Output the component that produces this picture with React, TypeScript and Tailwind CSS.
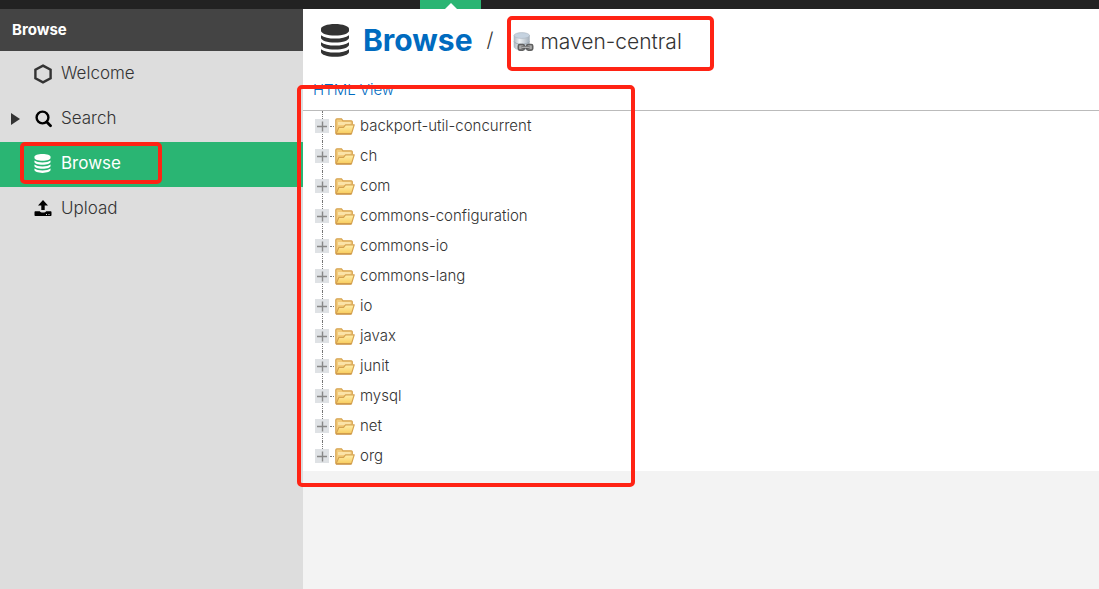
import { useState } from 'react'
import clsx from 'clsx'

const navItems = ['Welcome', 'Search', 'Browse', 'Upload'] as const
type NavItem = (typeof navItems)[number]

const folders = [
  'backport-util-concurrent',
  'ch',
  'com',
  'commons-configuration',
  'commons-io',
  'commons-lang',
  'io',
  'javax',
  'junit',
  'mysql',
  'net',
  'org',
]

function DatabaseIcon({ className }: { className?: string }) {
  return (
    <svg viewBox="0 0 28 33" className={className} fill="currentColor" aria-hidden="true">
      <path d="M14 0c8 0 14 2.200 14 4.800v2c0 2.600-6 4.800-14 4.800S0 9.400 0 6.800v-2C0 2.200 6 0 14 0z" />
      <path d="M0 11.200c3 2.300 8 3.400 14 3.400s11-1.100 14-3.400v2.600c0 2.600-6 4.800-14 4.800S0 16.400 0 13.800z" />
      <path d="M0 18.200c3 2.300 8 3.400 14 3.400s11-1.100 14-3.400v2.600c0 2.600-6 4.800-14 4.800S0 23.400 0 20.800z" />
      <path d="M0 25.200c3 2.300 8 3.400 14 3.400s11-1.100 14-3.400v2.800c0 2.600-6 4.800-14 4.800S0 30.600 0 28z" />
    </svg>
  )
}

function NavIcon({ name }: { name: NavItem }) {
  if (name === 'Welcome') {
    return (
      <svg viewBox="0 0 18 20" className="h-5 w-[18px]" fill="none" stroke="#333" strokeWidth="2.4" aria-hidden="true">
        <path d="M9 1.600 16.600 5.800v8.400L9 18.400 1.400 14.200V5.800z" />
      </svg>
    )
  }
  if (name === 'Search') {
    return (
      <svg viewBox="0 0 18 18" className="size-[18px]" fill="none" stroke="#000" aria-hidden="true">
        <circle cx="8.500" cy="7.500" r="5.900" strokeWidth="2.400" />
        <path d="m12.800 12 3.700 3.700" strokeWidth="2.800" strokeLinecap="round" />
      </svg>
    )
  }
  if (name === 'Browse') {
    return <DatabaseIcon className="h-[19px] w-[17px]" />
  }
  return (
    <svg viewBox="0 0 18 17" className="h-[17px] w-[18px]" fill="#000" aria-hidden="true">
      <path d="M9 0l5 5.500h-3.300V10H7.300V5.500H4z" />
      <path fillRule="evenodd" d="M1.500 11.200h4.300c.3.900 1.600 1.400 3.200 1.400s2.900-.5 3.200-1.400h4.300c.6 0 1 .4 1 1V15c0 .6-.4 1-1 1h-15c-.6 0-1-.4-1-1v-2.800c0-.6.4-1 1-1zM12 14v1h1v-1zm2.500 0v1h1v-1z" />
    </svg>
  )
}

function ProxyIcon() {
  return (
    <svg viewBox="0 0 21 20" className="h-5 w-[21px]" aria-hidden="true">
      <defs>
        <linearGradient id="drum">
          <stop offset="0" stopColor="#aeb8c2" />
          <stop offset=".35" stopColor="#eef2f5" />
          <stop offset="1" stopColor="#a5b0bb" />
        </linearGradient>
      </defs>
      <path d="M1 3.500v11c0 2 3.200 3.300 7.500 3.300s8-1.300 8-3.300v-11z" fill="url(#drum)" stroke="#b3bcc5" strokeWidth=".6" />
      <path d="M1 9.500c1 1.900 4 2.700 7.500 2.700s7-.8 8-2.700" fill="none" stroke="#98a4af" strokeWidth=".8" />
      <ellipse cx="8.750" cy="3.500" rx="7.750" ry="2.900" fill="#c6d3e0" stroke="#a9b4bf" strokeWidth=".6" />
      <g fill="#aaa" stroke="#606060" strokeWidth="1.600">
        <rect x="5.300" y="12.500" width="6" height="5.600" rx="1.500" />
        <rect x="13.700" y="12.500" width="6" height="5.600" rx="1.500" />
      </g>
      <path d="M8.500 15.300h8" stroke="#555" strokeWidth="2.800" />
      <path d="M8.500 15.200h8" stroke="#d5d5d5" strokeWidth="1" />
    </svg>
  )
}

function FolderIcon() {
  return (
    <svg viewBox="0 0 20 17" className="h-[17px] w-5 shrink-0" aria-hidden="true">
      <defs>
        <linearGradient id="flap" x2="0" y2="1">
          <stop offset="0" stopColor="#fff0b0" />
          <stop offset="1" stopColor="#f8cc5c" />
        </linearGradient>
      </defs>
      <path d="M.800 15.500V2c0-.7.400-1.200 1.200-1.200h4.500L8 2.800h8.300c.6 0 1 .4 1 1v3" fill="#f3cc7c" stroke="#d6a350" strokeWidth="1.200" />
      <path d="M3 4h12.500v3H3z" fill="#fbe3a8" />
      <path d="M1 15.700 4 9.300h4.500l2-2.500h8.700l-2.700 8.900z" fill="url(#flap)" stroke="#d6a350" strokeWidth="1.200" strokeLinejoin="round" />
      <path d="M1 16.200h15.500" stroke="#c98f40" strokeWidth="1" />
    </svg>
  )
}

function Marker({ className }: { className: string }) {
  return <span className={clsx('pointer-events-none absolute z-10 rounded-[5px] border-4 border-[#ff2314]', className)} />
}

function Sidebar({ active, onSelect }: { active: NavItem; onSelect: (item: NavItem) => void }) {
  return (
    <aside className="w-[303px] shrink-0 bg-[#ddd]">
      <h2 className="flex h-[42px] items-center bg-[#444] px-3 text-[15px] font-bold text-white">Browse</h2>
      <nav className="mt-px">
        {navItems.map((item) => (
          <div key={item} className="relative">
            <button
              type="button"
              onClick={() => onSelect(item)}
              className={clsx(
                'flex h-[45px] w-full items-center pb-0.5 text-left text-[17px]',
                item === active ? 'bg-[#2ab573] text-white' : 'font-light text-[#333]',
              )}
            >
              <span className="w-[34px] pl-[11px]">
                {item === 'Search' && (
                  <svg viewBox="0 0 9 12" className="h-3 w-[9px]" fill="#333" aria-hidden="true">
                    <path d="M0 0l9 6-9 6z" />
                  </svg>
                )}
              </span>
              <span className="w-[27px]">
                <NavIcon name={item} />
              </span>
              {item}
            </button>
            {item === 'Browse' && <Marker className="top-0 left-5 h-[42px] w-[142px]" />}
          </div>
        ))}
      </nav>
    </aside>
  )
}

function TreeRow({ name, last }: { name: string; last: boolean }) {
  return (
    <li className="relative flex h-[30px] items-center pl-3">
      <span className={clsx('absolute top-0 left-[19px] border-l border-dotted border-[#777]', last ? 'h-4' : 'h-full')} />
      <button type="button" aria-label={`Expand ${name}`} className="relative mr-px size-3.5 bg-[#dfe2e5]">
        <svg viewBox="0 0 14 14" className="size-3.5" stroke="#888" strokeWidth="1.400" aria-hidden="true">
          <path d="M2 7.500h10M7.500 2.500v10" />
        </svg>
      </button>
      <span className="mr-px w-1 border-t border-dotted border-[#777]" />
      <FolderIcon />
      <span className="pl-[5px]">{name}</span>
    </li>
  )
}

export default function App() {
  const [active, setActive] = useState<NavItem>('Browse')

  return (
    <div className="flex min-h-screen flex-col bg-[#f3f3f3] font-['Inter',sans-serif] text-[#333]">
      <div className="flex h-[9px] bg-[#222]">
        <div className="ml-[420px] flex w-[61px] items-end justify-center bg-[#2ab573]">
          <svg viewBox="0 0 12 6" className="h-1.5 w-3" fill="#fff" aria-hidden="true">
            <path d="M0 6l6-6 6 6z" />
          </svg>
        </div>
      </div>
      <div className="flex flex-1">
        <Sidebar active={active} onSelect={setActive} />
        <main className="min-w-0 flex-1">
          <div className="bg-white">
            <header className="flex items-start pt-[7px] pl-[18px]">
              <div className="flex h-12 items-center">
                <DatabaseIcon className="h-[33px] w-7" />
                <h1 className="ml-3.5 text-[30px] font-bold text-[#006bbf]">Browse</h1>
                <span className="mx-3.5 text-xl font-light">/</span>
              </div>
              <div className="relative flex h-[55px] w-[207px] items-center pb-1 pl-1.5">
                <Marker className="inset-0" />
                <ProxyIcon />
                <span className="pl-1.5 text-[21px] font-light">maven-central</span>
              </div>
            </header>
            <section className="relative text-[15px] font-light">
              <div className="flex h-10 items-center border-b border-[#bbb] pl-2.5">
                <a href="#html" className="text-[#006bbf]">HTML View</a>
              </div>
              <ul>
                {folders.map((name, i) => (
                  <TreeRow key={name} name={name} last={i === folders.length - 1} />
                ))}
              </ul>
              <Marker className="top-3.5 -bottom-4 -left-1.5 w-[338px]" />
            </section>
          </div>
        </main>
      </div>
    </div>
  )
}
